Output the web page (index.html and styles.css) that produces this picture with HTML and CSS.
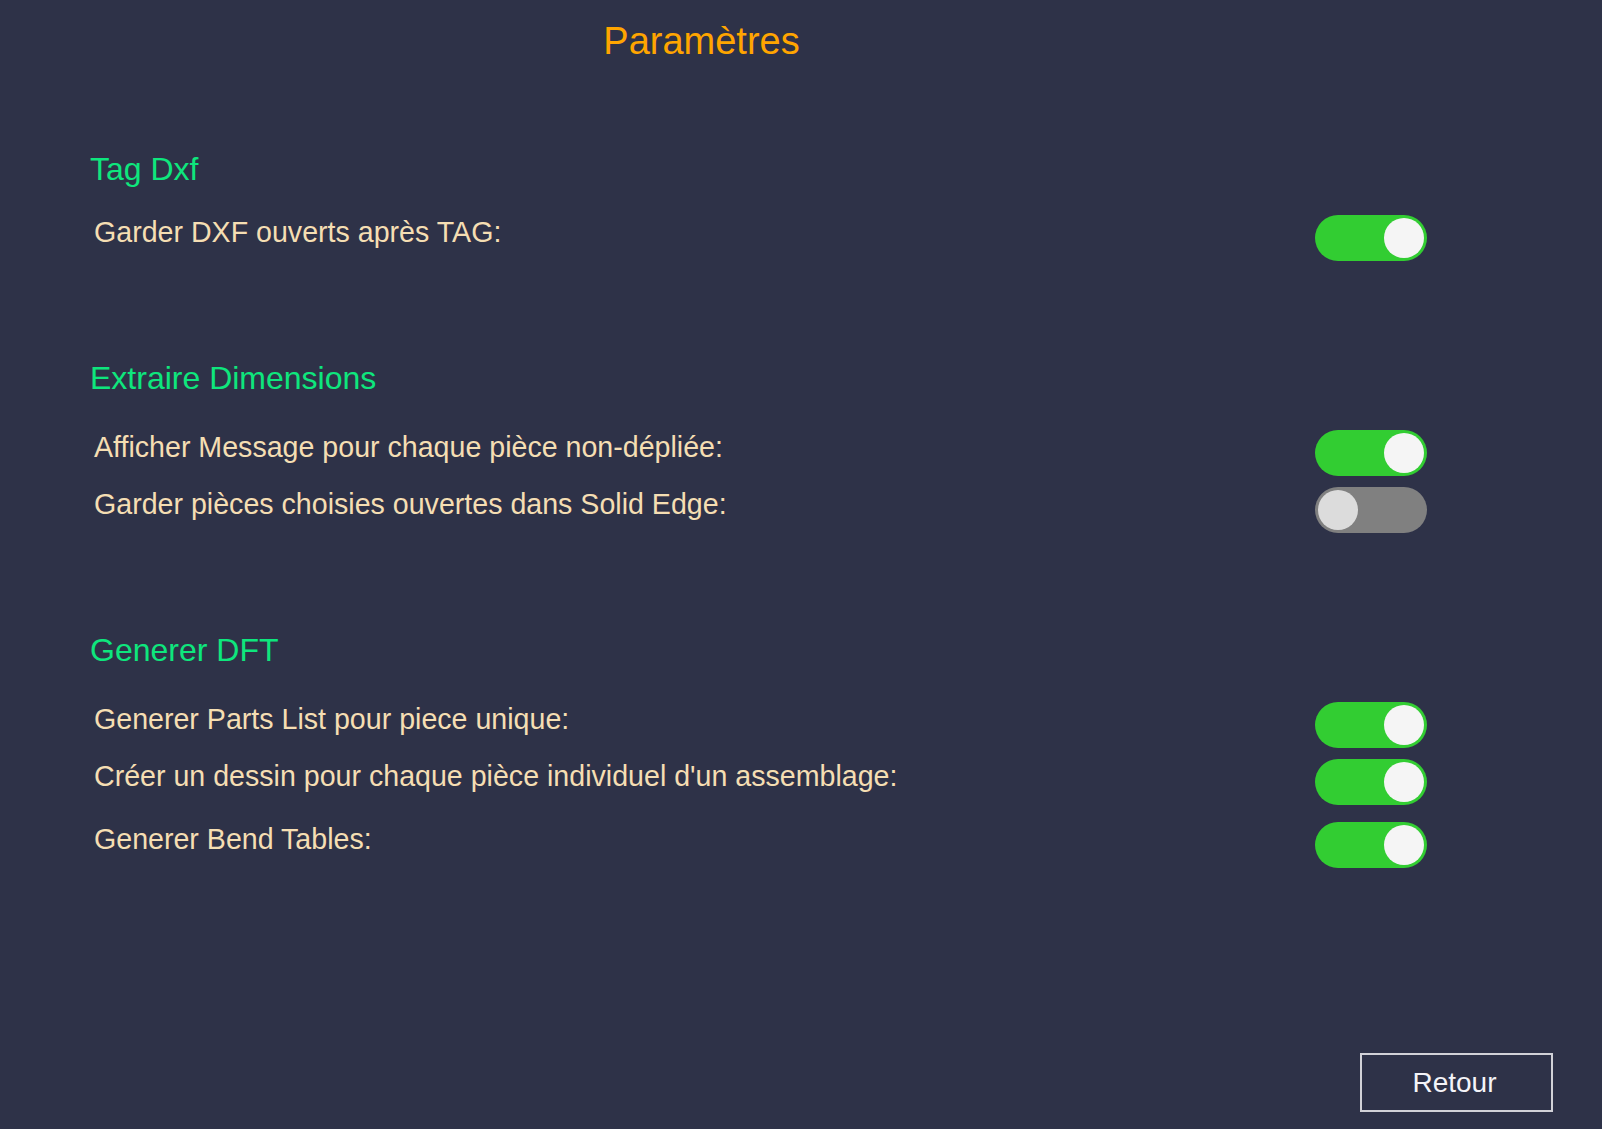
FILE: index.html
```html
<!DOCTYPE html>
<html lang="fr">
<head>
<meta charset="utf-8">
<title>Paramètres</title>
<link rel="stylesheet" href="styles.css">
</head>
<body>
<div class="page">
  <h1 class="title">Paramètres</h1>

  <section class="section section-first">
    <h2 class="section-head head-tight">Tag Dxf</h2>
    <div class="row">
      <span class="label">Garder DXF ouverts après TAG:</span>
      <span class="toggle on"><span class="knob"></span></span>
    </div>
  </section>

  <section class="section">
    <h2 class="section-head">Extraire Dimensions</h2>
    <div class="row">
      <span class="label">Afficher Message pour chaque pièce non-dépliée:</span>
      <span class="toggle on"><span class="knob"></span></span>
    </div>
    <div class="row">
      <span class="label">Garder pièces choisies ouvertes dans Solid Edge:</span>
      <span class="toggle off"><span class="knob"></span></span>
    </div>
  </section>

  <section class="section">
    <h2 class="section-head">Generer DFT</h2>
    <div class="row">
      <span class="label">Generer Parts List pour piece unique:</span>
      <span class="toggle on"><span class="knob"></span></span>
    </div>
    <div class="row">
      <span class="label">Créer un dessin pour chaque pièce individuel d'un assemblage:</span>
      <span class="toggle on"><span class="knob"></span></span>
    </div>
    <div class="row row-spaced">
      <span class="label">Generer Bend Tables:</span>
      <span class="toggle on"><span class="knob"></span></span>
    </div>
  </section>

  <div class="footer">
    <button class="btn" type="button">Retour</button>
  </div>
</div>
</body>
</html>
```

FILE: styles.css
```css
* { box-sizing: border-box; }

html, body {
  margin: 0;
  padding: 0;
  background: #2e3248;
}

body {
  font-family: "Liberation Sans", Arial, sans-serif;
}

.page {
  width: 1602px;
  height: 1129px;
  display: flex;
  flex-direction: column;
  padding-top: 20px;
  overflow: hidden;
}

.title {
  margin: 0;
  width: 1403px;
  text-align: center;
  font-size: 38px;
  line-height: 42px;
  font-weight: normal;
  color: #ffa500;
}

.section {
  margin-top: 99px;
  padding-left: 90px;
  padding-right: 175px;
  display: flex;
  flex-direction: column;
  gap: 11px;
}

.section-first {
  margin-top: 89px;
}

.section-head {
  margin: 0 0 22px 0;
  font-size: 32px;
  line-height: 37px;
  font-weight: normal;
  color: #0ee67d;
}

.head-tight {
  margin-bottom: 16px;
}

.row {
  display: flex;
  align-items: flex-start;
  justify-content: space-between;
  height: 46px;
}

.row-spaced {
  margin-top: 6px;
}

.label {
  padding-left: 4px;
  font-size: 28.6px;
  line-height: 34px;
  color: #f5deb3;
}

.toggle {
  position: relative;
  width: 112px;
  height: 46px;
  border-radius: 23px;
  flex: none;
}

.toggle.on { background: #32cd32; }
.toggle.off { background: #808080; }

.knob {
  position: absolute;
  top: 3px;
  width: 40px;
  height: 40px;
  border-radius: 50%;
}

.toggle.on .knob {
  right: 3px;
  background: #f5f5f5;
}

.toggle.off .knob {
  left: 3px;
  background: #dcdcdc;
}

.footer {
  margin-top: auto;
  display: flex;
  justify-content: flex-end;
  padding-right: 49px;
  padding-bottom: 17px;
}

.btn {
  width: 193px;
  height: 59px;
  background: transparent;
  border: 2px solid #d2d2d8;
  color: #f4f4f8;
  font-family: "Liberation Sans", Arial, sans-serif;
  font-size: 28px;
  padding: 0 4px 0 0;
}
```
